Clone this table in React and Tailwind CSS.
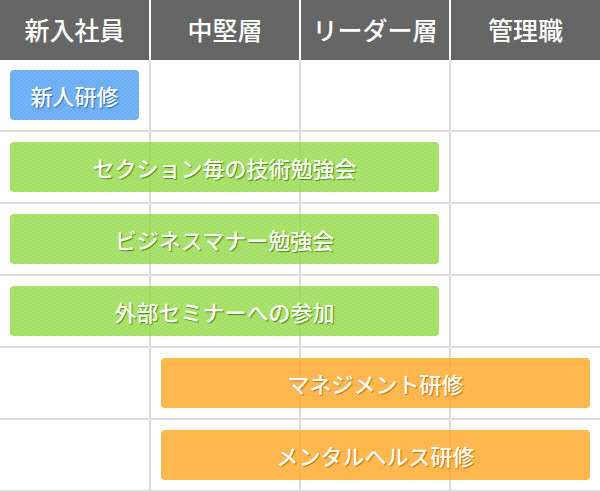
import React from 'react';

const headers = ["新入社員", "中堅層", "リーダー層", "管理職"];

// bar colours are a little transparent so the grid lines show through
const tones = {
    blue: "bg-[rgba(70,152,244,0.8)] [text-shadow:1px_1px_1px_#2a68bb]",
    green: "bg-[rgba(143,216,63,0.8)] [text-shadow:1px_1px_1px_#489010]",
    orange: "bg-[rgba(255,163,26,0.8)] [text-shadow:1px_1px_1px_#cc7200]"
};

const rows = [
    { label: "新人研修", tone: "blue", span: "col-start-1 col-end-2 ml-[10px] mr-[12px]" },
    { label: "セクション毎の技術勉強会", tone: "green", span: "col-start-1 col-end-4 ml-[10px] mr-[12px]" },
    { label: "ビジネスマナー勉強会", tone: "green", span: "col-start-1 col-end-4 ml-[10px] mr-[12px]" },
    { label: "外部セミナーへの参加", tone: "green", span: "col-start-1 col-end-4 ml-[10px] mr-[12px]" },
    { label: "マネジメント研修", tone: "orange", span: "col-start-2 col-end-5 mx-[10px]" },
    { label: "メンタルヘルス研修", tone: "orange", span: "col-start-2 col-end-5 mx-[10px]" }
];

const App = () => {
    return (
        <div className="w-[600px] bg-white font-['Noto_Sans_CJK_JP',sans-serif]">
            {/* header */}
            <div className="grid grid-cols-[151px_150px_150px_149px] h-[60px] bg-[#666666]">
                {headers.map((h, i) => (
                    <div
                        key={h}
                        className={`flex items-center justify-center text-white text-[25px] font-medium ${i < 3 ? "border-r-2 border-white" : ""}`}
                    >
                        {h}
                    </div>
                ))}
            </div>

            {rows.map((row) => (
                <div key={row.label} className="grid grid-cols-[151px_150px_150px_149px] grid-rows-[70px] border-b-2 border-[#dddddd]">
                    {[0, 1, 2, 3].map((c) => (
                        <div
                            key={c}
                            className={`row-start-1 ${["col-start-1", "col-start-2", "col-start-3", "col-start-4"][c]} ${c < 3 ? "border-r-2 border-[#dddddd]" : ""}`}
                        />
                    ))}
                    <div
                        className={`row-start-1 ${row.span} my-[10px] rounded-[4px] flex items-center justify-center text-white text-[22px] font-medium bg-[image:conic-gradient(rgba(255,255,255,0.07)_25%,transparent_0_50%,rgba(255,255,255,0.07)_0_75%,transparent_0)] bg-[length:4px_4px] ${tones[row.tone]}`}
                    >
                        {row.label}
                    </div>
                </div>
            ))}
        </div>
    );
};

export default App;
